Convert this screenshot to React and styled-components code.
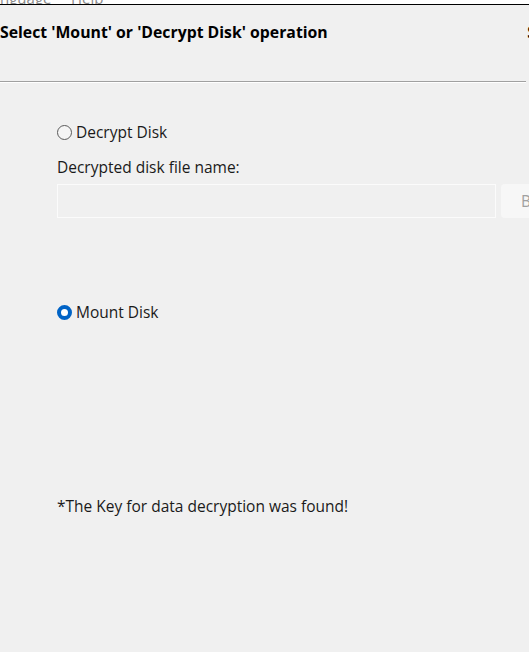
import React from 'react'
import styled, { createGlobalStyle } from 'styled-components';

const GlobalStyle = createGlobalStyle`
  html, body {
    margin: 0;
    padding: 0;
    background: #f0f0f0;
  }
  body {
    font-family: "Open Sans", "Noto Sans", sans-serif;
    color: #1a1a1a;
  }
`;

const Window = styled.div`
  width: 529px;
  height: 652px;
  overflow: hidden;
  background: #f0f0f0;
  display: flex;
  flex-direction: column;
`;

const MenuStrip = styled.div`
  height: 4px;
  background: #ffffff;
  border-bottom: 1px solid #000;
  overflow: hidden;
  position: relative;
  .menuText{
    position: absolute;
    left: 0;
    top: -12px;
    font-size: 15px;
    color: #8a8a8a;
    white-space: nowrap;
  }
`;

const Header = styled.div`
  height: 75px;
  display: flex;
  justify-content: space-between;
  padding-top: 16px;
  box-sizing: border-box;
  h1{
    margin: 0;
    font-size: 15.8px;
    font-weight: 700;
    color: #000;
    line-height: 22px;
    white-space: nowrap;
  }
  .cut{
    font-size: 15.8px;
    font-weight: 700;
    color: #000;
    line-height: 22px;
    margin-right: -7px;
  }
`;

const Separator = styled.div`
  height: 1px;
  background: #a0a0a0;
  border-bottom: 1px solid #ffffff;
  margin-right: 3px;
  margin-top: 1px;
`;

const Body = styled.div`
  display: flex;
  flex-direction: column;
  padding: 39px 0 0 57px;
`;

const RadioRow = styled.label`
  display: flex;
  align-items: center;
  gap: 4px;
  height: 20px;
  font-size: 15.5px;
  color: #1a1a1a;
  margin-top: ${p => p.$top || 0}px;
`;

const RadioDot = styled.span`
  width: 15px;
  height: 15px;
  border-radius: 50%;
  box-sizing: border-box;
  flex-shrink: 0;
  background: ${p => p.$checked ? '#ffffff' : '#f5f5f5'};
  border: ${p => p.$checked ? '4px solid #0063c6' : '1px solid #5a5a5a'};
`;

const FieldLabel = styled.div`
  font-size: 15.5px;
  line-height: 20px;
  margin-top: 15px;
  color: #1a1a1a;
`;

const FileRow = styled.div`
  display: flex;
  gap: 5px;
  margin-top: 7px;
  margin-right: -10px;
`;

const FileInput = styled.div`
  width: 439px;
  height: 34px;
  box-sizing: border-box;
  border: 1px solid #fbfbfb;
  background: #f0f0f0;
  flex-shrink: 0;
`;

const BrowseButton = styled.div`
  width: 80px;
  height: 34px;
  box-sizing: border-box;
  border-radius: 4px;
  background: #f7f7f7;
  flex-shrink: 0;
  display: flex;
  align-items: center;
  padding-left: 20px;
  font-size: 15.5px;
  color: #a0a0a0;
`;

const Note = styled.div`
  font-size: 15.5px;
  line-height: 20px;
  color: #1a1a1a;
  margin-top: 174px;
`;

export default function App() {
  return (
    <>
      <GlobalStyle />
      <Window>
        <MenuStrip>
          <span className='menuText'>nguage&nbsp;&nbsp;&nbsp;&nbsp;&nbsp;Help</span>
        </MenuStrip>
        <Header>
          <h1>Select 'Mount' or 'Decrypt Disk' operation</h1>
          <span className='cut'>S</span>
        </Header>
        <Separator />
        <Body>
          <RadioRow $top={0}>
            <RadioDot />
            Decrypt Disk
          </RadioRow>
          <FieldLabel>Decrypted disk file name:</FieldLabel>
          <FileRow>
            <FileInput />
            <BrowseButton>Browse</BrowseButton>
          </FileRow>
          <RadioRow $top={84}>
            <RadioDot $checked />
            Mount Disk
          </RadioRow>
          <Note>*The Key for data decryption was found!</Note>
        </Body>
      </Window>
    </>
  )
}
